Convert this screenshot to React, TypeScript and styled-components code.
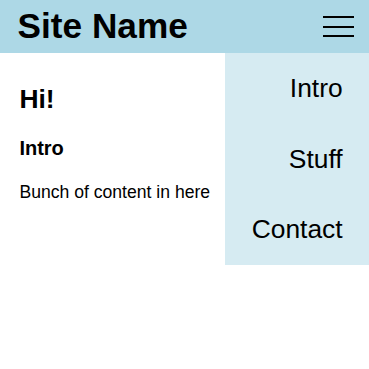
import React from "react";
import styled, { createGlobalStyle } from "styled-components";

const Global = createGlobalStyle`
  html, body { margin: 0; padding: 0; background: #ffffff; }
  body { font-family: "Liberation Sans", Arial, sans-serif; font-size: 17.6px; color: #000; }
`;

const Page = styled.div`
  position: relative;
  width: 369px;
  min-height: 369px;
`;

const Header = styled.header`
  display: flex;
  align-items: center;
  justify-content: space-between;
  height: 53px;
  padding: 0 15px 0 17.6px;
  box-sizing: border-box;
  background: #add8e6;
`;

const SiteName = styled.h1`
  margin: 0;
  font-size: 35.2px;
  font-weight: bold;
  line-height: 1.15;
`;

const Burger = styled.button`
  display: flex;
  flex-direction: column;
  gap: 7.5px;
  padding: 0;
  border: 0;
  background: transparent;
  cursor: pointer;
`;

const BurgerLine = styled.span`
  display: block;
  width: 31px;
  height: 2px;
  background: #000;
`;

const Menu = styled.nav`
  position: absolute;
  top: 53px;
  right: 0;
  display: flex;
  flex-direction: column;
  background: #d6ebf2;
`;

const MenuItem = styled.a`
  display: block;
  padding: 20.1px 26.4px;
  font-size: 26.4px;
  line-height: 1.15;
  text-align: right;
  color: #000;
  text-decoration: none;
`;

const Main = styled.main`
  display: flex;
  flex-direction: column;
  padding: 30.5px 17.6px 0 19.4px;
`;

const Title = styled.h2`
  margin: 0;
  font-size: 26.4px;
  line-height: 1.15;
`;

const Subtitle = styled.h3`
  margin: 23px 0 0;
  font-size: 20px;
  line-height: 1.15;
`;

const Text = styled.p`
  margin: 22.5px 0 0;
  font-size: 17.6px;
  line-height: 1.15;
`;

export default function App() {
  return (
    <Page>
      <Global />
      <Header>
        <SiteName>Site Name</SiteName>
        <Burger aria-label="Menu">
          <BurgerLine />
          <BurgerLine />
          <BurgerLine />
        </Burger>
      </Header>
      <Main>
        <Title>Hi!</Title>
        <Subtitle>Intro</Subtitle>
        <Text>Bunch of content in here</Text>
      </Main>
      <Menu>
        <MenuItem href="#intro">Intro</MenuItem>
        <MenuItem href="#stuff">Stuff</MenuItem>
        <MenuItem href="#contact">Contact</MenuItem>
      </Menu>
    </Page>
  );
}
